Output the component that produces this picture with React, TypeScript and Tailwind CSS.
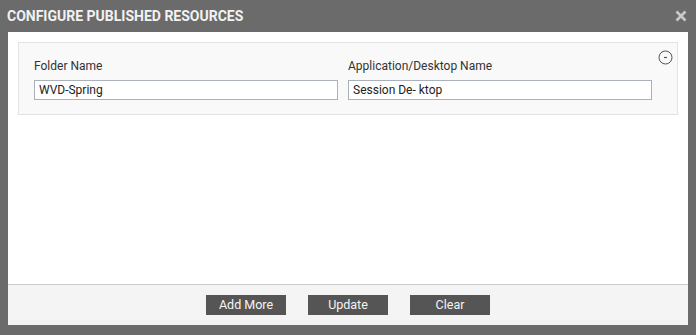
import React from 'react';

const rows = [{ folder: 'WVD-Spring', app: 'Session De- ktop' }];

export default function App() {
  return (
    <div className="w-[696px] h-[335px] bg-[#6b6b6b] flex flex-col font-['Roboto',sans-serif]">
      {/* header */}
      <div className="h-[32px] flex items-center justify-between pl-[7px] pr-[9px]">
        <span className="text-[14px] font-bold text-[#f2f2f2]">CONFIGURE PUBLISHED RESOURCES</span>
        <svg width="12" height="12" viewBox="0 0 12 12" className="text-[#c9c9c9]">
          <path d="M1.5 1.5 L10.5 10.5 M10.5 1.5 L1.5 10.5" stroke="currentColor" strokeWidth="2.6" strokeLinecap="butt" />
        </svg>
      </div>

      <div className="flex-1 mx-[8px] mb-[10px] bg-white flex flex-col">
        <div className="flex-1 p-[10px]">
          {rows.map((r, i) => (
            <div key={i} className="relative bg-[#f9f9f9] border border-[#e3e3e3] pt-[15px] pb-[14px] pl-[15px]">
              <div className="grid grid-cols-[304px_304px] gap-x-[10px]">
                <div className="flex flex-col">
                  <label className="text-[12px] leading-[16px] text-[#333] mb-[6px]">Folder Name</label>
                  <input
                    readOnly
                    value={r.folder}
                    className="h-[20px] border border-[#aab1bd] bg-white px-[4px] text-[12px] text-[#222] outline-none"
                  />
                </div>
                <div className="flex flex-col">
                  <label className="text-[12px] leading-[16px] text-[#333] mb-[6px]">Application/Desktop Name</label>
                  <input
                    readOnly
                    value={r.app}
                    className="h-[20px] border border-[#aab1bd] bg-white px-[4px] text-[12px] text-[#222] outline-none"
                  />
                </div>
              </div>
              <svg width="15" height="15" viewBox="0 0 15 15" className="absolute top-[7px] right-[4px] text-[#555]">
                <circle cx="7.5" cy="7.5" r="6.5" fill="none" stroke="currentColor" strokeWidth="1" />
                <path d="M6 7.5 H9" stroke="currentColor" strokeWidth="1.2" />
              </svg>
            </div>
          ))}
        </div>

        <div className="h-[41px] border-t border-[#cccccc] bg-[#f4f4f4] flex items-center justify-center gap-[22px]">
          {['Add More', 'Update', 'Clear'].map((b) => (
            <button key={b} className="w-[80px] h-[20px] bg-[#555555] text-[#f4f4f4] text-[12.5px] leading-[20px]">
              {b}
            </button>
          ))}
        </div>
      </div>
    </div>
  );
}
